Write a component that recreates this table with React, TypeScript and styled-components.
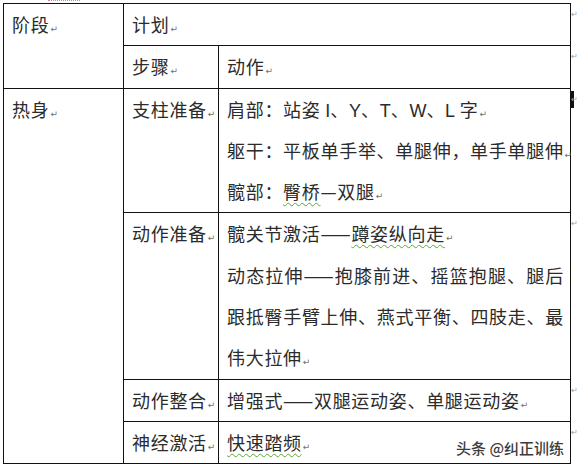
import React from "react";
import styled, { createGlobalStyle } from "styled-components";

const GlobalStyle = createGlobalStyle`
  html, body {
    margin: 0;
    padding: 0;
    background: #ffffff;
  }
  body {
    font-family: "Noto Sans CJK SC", "Liberation Sans", sans-serif;
  }
`;

const Page = styled.div`
  position: relative;
  width: 577px;
  height: 471px;
  padding: 3px 0 0 3px;
  box-sizing: border-box;
  overflow: hidden;
  color: #2b2b2b;
`;

const SpellLine = styled.div`
  position: absolute;
  top: 0;
  left: 48px;
  width: 32px;
  border-top: 1px dotted #e07aa0;
`;

const Sheet = styled.table`
  width: 568px;
  border-collapse: collapse;
  table-layout: fixed;
`;

const Cell = styled.td`
  position: relative;
  border: 1px solid #111111;
  padding: 0 0 0 8px;
  vertical-align: top;
  font-size: 18px;
  letter-spacing: 0.7px;
  line-height: 41.3px;
  white-space: nowrap;
`;

const Line = styled.div<{ $fill?: boolean }>`
  height: 41.3px;
  padding-right: 6px;
  text-align: ${(p) => (p.$fill ? "justify" : "left")};
  text-align-last: ${(p) => (p.$fill ? "justify" : "auto")};
`;

const Latin = styled.span`
  font-family: "Liberation Sans", Arial, sans-serif;
  letter-spacing: 0;
  line-height: 1;
`;

const WavyText = styled.span`
  text-decoration: underline wavy #5aa832;
  text-decoration-thickness: 1px;
  text-underline-offset: 3px;
`;

const Para = styled.span`
  font-family: "DejaVu Sans", sans-serif;
  font-size: 9px;
  line-height: 1;
  color: #6f6f6f;
  letter-spacing: 0;
  margin-left: 1px;
`;

const RowEnd = styled.span`
  position: absolute;
  top: 0;
  right: -8px;
  font-family: "DejaVu Sans", sans-serif;
  font-size: 8px;
  line-height: 22px;
  color: #a0a0a0;
  letter-spacing: 0;
`;

const Caret = styled.span`
  position: absolute;
  top: 2px;
  right: -4px;
  width: 3px;
  height: 17px;
  background: #111111;
`;

const Watermark = styled.div`
  position: absolute;
  right: 13px;
  bottom: 13px;
  font-family: "Noto Sans CJK SC", sans-serif;
  font-size: 15px;
  font-weight: 500;
  line-height: 20px;
  color: #3c3c3c;
  text-shadow: 0 0 2px #ffffff, 0 0 2px #ffffff;
`;

type ActionLine = {
  text: React.ReactNode;
  fill?: boolean;
  mark?: boolean;
};

type StepRow = {
  step: string;
  lines: ActionLine[];
};

const getSteps = (): StepRow[] => [
  {
    step: "支柱准备",
    lines: [
      {
        text: (
          <>
            肩部：站姿 <Latin>I</Latin>、<Latin>Y</Latin>、<Latin>T</Latin>、<Latin>W</Latin>、<Latin>L</Latin> 字
          </>
        ),
        mark: true,
      },
      { text: "躯干：平板单手举、单腿伸，单手单腿伸", mark: true },
      {
        text: (
          <>
            髋部：<WavyText>臀桥</WavyText>—双腿
          </>
        ),
        mark: true,
      },
    ],
  },
  {
    step: "动作准备",
    lines: [
      {
        text: (
          <>
            髋关节激活——<WavyText>蹲姿纵向走</WavyText>
          </>
        ),
        mark: true,
      },
      { text: "动态拉伸——抱膝前进、摇篮抱腿、腿后", fill: true },
      { text: "跟抵臀手臂上伸、燕式平衡、四肢走、最", fill: true },
      { text: "伟大拉伸", mark: true },
    ],
  },
  {
    step: "动作整合",
    lines: [{ text: "增强式——双腿运动姿、单腿运动姿", mark: true }],
  },
  {
    step: "神经激活",
    lines: [{ text: <WavyText>快速踏频</WavyText>, mark: true }],
  },
];

export default function App() {
  const steps = getSteps();
  return (
    <>
      <GlobalStyle />
      <Page>
        <SpellLine />
        <Sheet>
          <colgroup>
            <col style={{ width: 120 }} />
            <col style={{ width: 95 }} />
            <col />
          </colgroup>
          <tbody>
            <tr>
              <Cell rowSpan={2}>
                阶段<Para>↵</Para>
              </Cell>
              <Cell colSpan={2}>
                计划<Para>↵</Para>
                <RowEnd>↵</RowEnd>
              </Cell>
            </tr>
            <tr>
              <Cell>
                步骤<Para>↵</Para>
              </Cell>
              <Cell>
                <Line>
                  动作<Para>↵</Para>
                </Line>
                <RowEnd>↵</RowEnd>
              </Cell>
            </tr>
            {steps.map((row, i) => (
              <tr key={row.step}>
                {i === 0 && (
                  <Cell rowSpan={steps.length}>
                    热身<Para>↵</Para>
                  </Cell>
                )}
                <Cell>
                  {row.step}
                  <Para>↵</Para>
                </Cell>
                <Cell>
                  {row.lines.map((line, j) => (
                    <Line key={j} $fill={line.fill}>
                      {line.text}
                      {line.mark && <Para>↵</Para>}
                    </Line>
                  ))}
                  {i === 0 && <Caret />}
                  <RowEnd>↵</RowEnd>
                </Cell>
              </tr>
            ))}
          </tbody>
        </Sheet>
        <Watermark>头条 @纠正训练</Watermark>
      </Page>
    </>
  );
}
